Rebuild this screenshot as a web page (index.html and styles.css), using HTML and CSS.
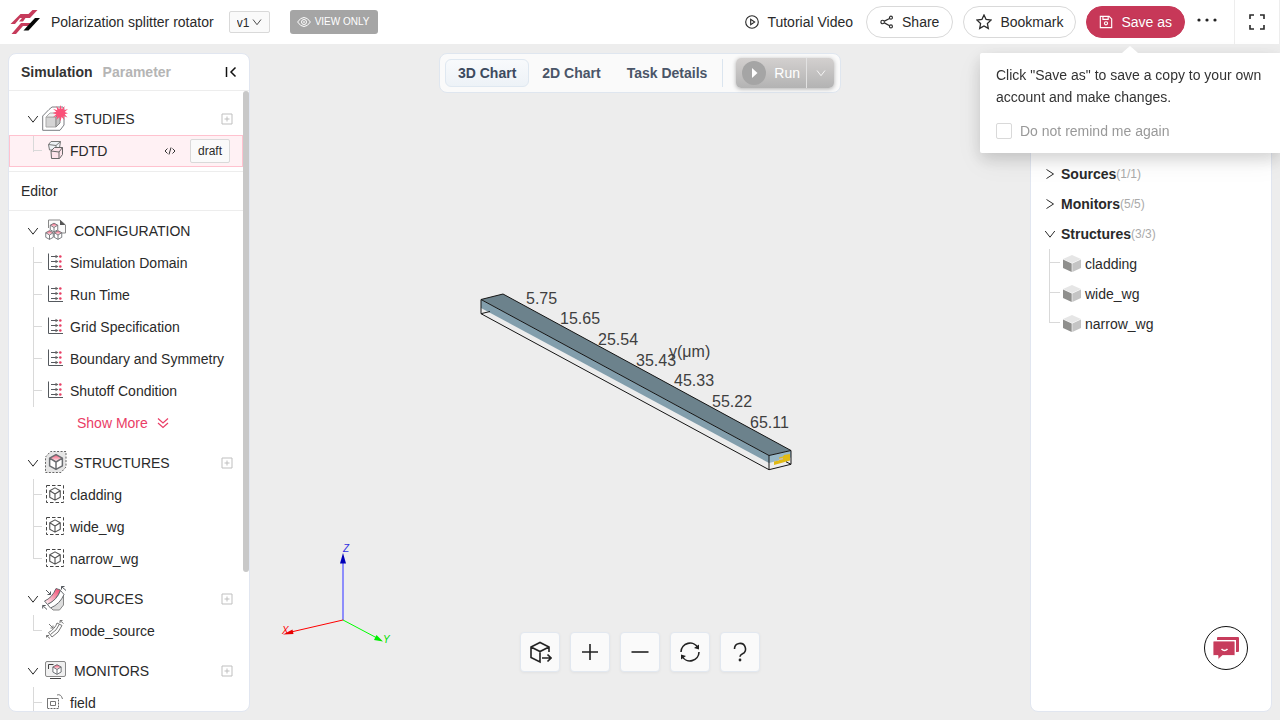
FILE: index.html
```html
<!DOCTYPE html>
<html lang="en">
<head>
<meta charset="utf-8">
<meta name="viewport" content="width=device-width, initial-scale=1">
<title>Polarization splitter rotator</title>
<link rel="stylesheet" href="styles.css">
</head>
<body>
<svg class="sprite" aria-hidden="true">
  <defs>
    <linearGradient id="pink" x1="0" y1="0" x2="0" y2="1"><stop offset="0" stop-color="#f0506f"/><stop offset="1" stop-color="#fff"/></linearGradient>
    <linearGradient id="pinkBand" x1="1" y1="0" x2="0" y2="1"><stop offset="0" stop-color="#f23f68"/><stop offset="1" stop-color="#fff"/></linearGradient>
    <symbol id="down" viewBox="0 0 12 12"><path d="M1.200 3 6 9.200 10.800 3" fill="none" stroke="currentColor"/></symbol>
    <symbol id="right" viewBox="0 0 12 12"><path d="M2.500 1.500 9.500 6 2.500 10.500" fill="none" stroke="currentColor"/></symbol>
    <symbol id="add" viewBox="0 0 12 12"><path d="M1 1h10v10H1zM6 3.500v5M3.500 6h5" fill="none" stroke="currentColor"/></symbol>
    <symbol id="cube" viewBox="0 0 16 16"><path d="M8 1 14 4.300v7.400L8 15 2 11.700V4.300zM2 4.300 8 8l6-3.700M8 8v7" fill="none" stroke="currentColor" stroke-width="1.300" stroke-linejoin="round"/></symbol>
    <symbol id="redcube" viewBox="0 0 16 16"><path d="M8 1 14 4.300v7.400L8 15 2 11.700V4.300z" fill="#fff"/><path d="M8 1 14 4.300 8 8 2 4.300z" fill="url(#pink)"/><path d="M8 1 14 4.300v7.400L8 15 2 11.700V4.300zM2 4.300 8 8l6-3.700M8 8v7" fill="none" stroke="#6a6d71" stroke-width="1.400" stroke-linejoin="round"/></symbol>
    <symbol id="param" viewBox="0 0 20 20">
      <path d="M3.500 1.500v16H18" fill="none" stroke="#55595e"/>
      <path d="M6 4.500h7M6 9.500h7M6 14.500h7" fill="none" stroke="#55595e"/>
      <path d="M10.500 2.700l3 1.800-3 1.800zM10.500 7.700l3 1.800-3 1.800zM10.500 12.700l3 1.800-3 1.800z" fill="#666"/>
      <circle cx="15.300" cy="4.500" r="1.300" fill="#e83e64"/><circle cx="15.300" cy="9.500" r="1.300" fill="#e83e64"/><circle cx="15.300" cy="14.500" r="1.300" fill="#e83e64"/>
    </symbol>
    <symbol id="struct" viewBox="0 0 20 20"><rect x="1.500" y="1.500" width="17" height="17" fill="none" stroke="#444" stroke-dasharray="3.500 2"/><use href="#cube" x="3" y="3" width="14" height="14" color="#555"/></symbol>
    <symbol id="solid" viewBox="0 0 18 18"><path d="M9 0 18 4 9 8 0 4z" fill="#e6e6e6"/><path d="M0 4.500 8.700 8.500v8.500L0 13z" fill="#8f8f8d"/><path d="M18 4.500 9.300 8.500v8.500L18 13z" fill="#c4c4c4"/></symbol>
  </defs>
</svg>

<header class="topbar">
  <svg class="logo" viewBox="0 0 30 24" aria-hidden="true"><path d="M22.500 0h5L20 8h-4.500l-2.500 3.500H9L12 8h-2l-5 6H.500L10.500 4h8z" fill="#c63b5b"/><path d="M11 13h10l-3 3h-5L6 24H1.500z" fill="#c63b5b"/><path d="M25 8h5L18.500 20.500H13.500l4.500-5z" fill="#050505"/></svg>
  <h1 class="title">Polarization splitter rotator</h1>
  <label class="version"><select aria-label="Version"><option>v1</option></select><svg viewBox="0 0 12 12" aria-hidden="true"><use href="#down"/></svg></label>
  <span class="badge"><svg viewBox="0 0 14 14" aria-hidden="true"><path d="M.6 7Q3.500 2.500 7 2.500T13.400 7Q10.500 11.500 7 11.500T.6 7z"/><circle cx="7" cy="7" r="2.500"/><circle cx="7" cy="7" r=".5"/></svg>VIEW ONLY</span>
  <nav class="actions">
    <a class="tutorial" href="#"><svg class="ico" viewBox="0 0 16 16"><circle cx="8" cy="8" r="7.200"/><path d="M6.500 5v6L11 8z"/></svg>Tutorial Video</a>
    <button class="pill"><svg class="ico" viewBox="0 0 16 16"><circle cx="3" cy="8" r="2"/><circle cx="12.500" cy="3" r="1.700"/><circle cx="12.500" cy="13" r="1.700"/><path d="M5 7 11 4M5 9l6 3.200"/></svg>Share</button>
    <button class="pill star"><svg class="ico" viewBox="0 0 16 16"><path d="M8 1l2.100 4.500 4.900.6-3.600 3.400.9 4.900L8 12l-4.300 2.400.9-4.900L1 6.100l4.900-.6z"/></svg>Bookmark</button>
    <button class="pill primary"><svg class="ico" viewBox="0 0 16 16"><path d="M1.500 1.500h10l3 3v10h-13zM4.500 1.500V5h6V1.500"/><circle cx="8" cy="9.500" r="1.800"/></svg>Save as</button>
    <button class="plain more" aria-label="More"><svg viewBox="0 0 20 8"><circle cx="2" cy="4" r="1.600"/><circle cx="10" cy="4" r="1.600"/><circle cx="18" cy="4" r="1.600"/></svg></button>
    <button class="plain full" aria-label="Full screen"><svg viewBox="0 0 16 16"><path d="M1 5V1h4M11 1h4v4M15 11v4h-4M5 15H1v-4"/></svg></button>
  </nav>
</header>

<main class="workspace">
  <aside class="panel left">
    <div class="tabs">
      <button class="plain active">Simulation</button><button class="plain">Parameter</button>
      <button class="plain collapse" aria-label="Collapse"><svg viewBox="0 0 12 12"><path d="M1.500 1v10M10.500 1.500 6 6l4.500 4.500"/></svg></button>
    </div>
    <div class="scroll-area">
      <div class="tree">
        <section class="group studies">
          <div class="group-head"><svg class="chev"><use href="#down"/></svg>
            <svg class="big" viewBox="0 0 26 26"><path d="M.7 11 7 4.500 10 2h11l1 2v16l-4 5.300H.7z" fill="#fff" stroke="#7a7d81"/><path d="M4 12h10v10H4z" fill="#d4d4d4" stroke="#aaa"/><path d="M4 12 8 8h10l-4 4z" fill="#eee" stroke="#aaa"/><path d="M18 8v10l-4 4V12z" fill="#c4c4c4" stroke="#888"/><path d="M18.500 0 19.700 4.200 22.700 1 21.700 5.300 26 4 22.700 7 26 8.200 22.700 9.300 25.500 12.500 21.500 11 22.500 15 19.600 12 18.500 16.500 17.300 12 14.300 15 15.300 10.900 11 12.300 14.300 9.200 10.500 8 14.300 6.800 11 3.700 15.300 5.200 14.300 1 17.300 4.200z" fill="#fb5078"/></svg>
            <span>STUDIES</span><button class="plain add" aria-label="Add study"><svg><use href="#add"/></svg></button></div>
          <ul>
            <li class="selected"><svg class="small" viewBox="0 0 20 20"><path d="M3.500 4.500 6 1.500h9.500l-1 6.500-3 2H4.500z" fill="#eef1f5" stroke="#777"/><path d="M3.500 4.500l7.500 1 4.500-4M11 5.500v4" fill="none" stroke="#777"/><path d="M6 11 9.500 7.500h8v7L14.500 18.500H6.500z" fill="#fde3ea" stroke="#666"/><path d="M6 11l8 1 3.500-4.500M14 12v6.500" fill="none" stroke="#666"/></svg><span>FDTD</span>
              <button class="plain code" aria-label="View code"><svg viewBox="0 0 12 10"><path d="M3.500 2.500 1 5l2.500 2.500M8.500 2.500 11 5 8.500 7.500M7 1.500l-2 7"/></svg></button><button class="draft">draft</button></li>
          </ul>
        </section>
        <h2 class="editor">Editor</h2>
        <section class="group">
          <div class="group-head"><svg class="chev"><use href="#down"/></svg>
            <svg class="big" viewBox="0 0 26 26"><path d="M6.500 11V3H18l5.500 5v8H17" fill="#fafafa" stroke="#888"/><path d="M18 3v5h5.500z" fill="#555"/><use href="#redcube" x="7" y="5.500" width="10" height="10"/><use href="#redcube" x="2.500" y="13" width="10" height="10"/><use href="#redcube" x="11" y="13" width="10" height="10"/></svg>
            <span>CONFIGURATION</span></div>
          <ul class="open">
            <li><svg class="small"><use href="#param"/></svg><span>Simulation Domain</span></li>
            <li><svg class="small"><use href="#param"/></svg><span>Run Time</span></li>
            <li><svg class="small"><use href="#param"/></svg><span>Grid Specification</span></li>
            <li><svg class="small"><use href="#param"/></svg><span>Boundary and Symmetry</span></li>
            <li><svg class="small"><use href="#param"/></svg><span>Shutoff Condition</span></li>
          </ul>
          <button class="plain show-more">Show More<svg viewBox="0 0 12 12"><path d="M1 1.500 6 6l5-4.500M1 6 6 10.500 11 6"/></svg></button>
        </section>
        <section class="group">
          <div class="group-head"><svg class="chev"><use href="#down"/></svg>
            <svg class="big" viewBox="0 0 26 26"><path d="M3.500 8l5-5.500h15.500V18l-5 5.500H3.500z" fill="#e6e6e6" stroke="#666" stroke-dasharray="2 1.500"/><use href="#redcube" x="5.500" y="4.500" width="17" height="17"/></svg>
            <span>STRUCTURES</span><button class="plain add" aria-label="Add structure"><svg><use href="#add"/></svg></button></div>
          <ul>
            <li><svg class="small"><use href="#struct"/></svg><span>cladding</span></li>
            <li><svg class="small"><use href="#struct"/></svg><span>wide_wg</span></li>
            <li><svg class="small"><use href="#struct"/></svg><span>narrow_wg</span></li>
          </ul>
        </section>
        <section class="group">
          <div class="group-head"><svg class="chev"><use href="#down"/></svg>
            <svg class="big" viewBox="0 0 26 26"><path d="M12 17 21.500 9v11l-4 5H11l-3-3z" fill="#ddd" stroke="#888"/><path d="M2.500 16Q10 13 14 3.500L18.500 5Q15 15 5.500 19.500z" fill="url(#pinkBand)" stroke="#6a6d71"/><path d="M5.500 19.500Q15 15 18.500 5.500L22 9.500Q18 19 8.500 23z" fill="#fff" stroke="#6a6d71"/><path d="M4 5l4.500 4.500M8.500 6.500v3h-3M24 5.500l-4.500-4M19.500 4.500v-3h3M5 24.500.7 20.500M.7 23.500v-3h3" fill="none" stroke="#55595e"/></svg>
            <span>SOURCES</span><button class="plain add" aria-label="Add source"><svg><use href="#add"/></svg></button></div>
          <ul>
            <li><svg class="small" viewBox="0 0 20 20"><path d="M3.500 12.500Q10 9 12 3L17 5.500Q14 13 7 17zM5.500 14.500Q12 10.500 14.500 4" fill="#fff" stroke="#777"/><path d="M4 4l4 4M8 5.500V8H5.500M18.500 3.500l-3.500-3M15 3V.5h2.500M5 18.500l-3.500-3M1.500 17.500v-2H4" fill="none" stroke="#777"/></svg><span>mode_source</span></li>
          </ul>
        </section>
        <section class="group">
          <div class="group-head"><svg class="chev"><use href="#down"/></svg>
            <svg class="big" viewBox="0 0 26 26"><rect x="3.500" y="4.500" width="20" height="15" rx="1.500" fill="#f0f0f0" stroke="#888"/><path d="M6.500 12V7.500h5M8 21.500h11" fill="none" stroke="#444"/><use href="#redcube" x="9.500" y="7" width="11" height="11"/></svg>
            <span>MONITORS</span><button class="plain add" aria-label="Add monitor"><svg><use href="#add"/></svg></button></div>
          <ul class="open">
            <li><svg class="small" viewBox="0 0 20 20"><path d="M2.500 6.500h11v10h-11z" fill="none" stroke="#666" stroke-dasharray="2 1"/><path d="M5.500 9.500h5v4h-5zM2.500 16V6.500H13M12 3q4-1.500 5.500 4" fill="none" stroke="#777"/></svg><span>field</span></li>
          </ul>
        </section>
      </div>
      <div class="track"><div class="thumb"></div></div>
    </div>
  </aside>

  <section class="stage">
    <svg class="scene" viewBox="250 53 780 659" role="img" aria-label="3D model of the splitter">
      <path d="M481 299.500 503 294 791 450.500 769 455.500z" fill="#6c828c"/>
      <path d="M481 299.500 769 455.500v7.500L481 308z" fill="#829eac"/>
      <path d="M769 455.500 791 450.500v7L769 463z" fill="#98b7c6"/>
      <path d="M774 461.500l5-1v-3l4-1 1-1.500 6-1v6.500L774 465z" fill="#e1ba14"/>
      <path d="M779 459.500l4-1" stroke="#c9bcb0" stroke-width="1.500"/>
      <path d="M481 299.500 503 294 791 450.500 769 455.500zM481 299.500V313.700L769 469.700V455.500M769 469.700 791 464.300V450.500M481 313.700l9-2.200M791 464.300l-5-2.500" fill="none" stroke="#151515" stroke-linejoin="round"/>
      <g class="ticks">
        <text x="526" y="304">5.75</text><text x="560" y="324">15.65</text><text x="598" y="345">25.54</text><text x="636" y="366">35.43</text><text x="669" y="357">y(μm)</text><text x="674" y="386">45.33</text><text x="712" y="407">55.22</text><text x="750" y="428">65.11</text>
      </g>
      <g class="axes">
        <text x="343" y="552" fill="#3030e0">Z</text><text x="282" y="634" fill="#f00">X</text><text x="383" y="643" fill="#0d0">Y</text>
        <path d="M343 620v-57" stroke="#6c6cff" stroke-width="1.500"/><path d="M343 553l3 10.500h-6z" fill="#0000b8"/>
        <path d="M343 620l-52 12" stroke="#f00"/><path d="M283 634.500l9.500-5 1 4.500z" fill="#e80000"/>
        <path d="M343 620l34 18" stroke="#0f0"/><path d="M383 641.500l-9-1.500 2.500-5z" fill="#00ee00"/>
      </g>
    </svg>
    <div class="toolbar">
      <button class="tab current">3D Chart</button><button class="tab">2D Chart</button><button class="tab">Task Details</button>
      <span class="rule"></span>
      <div class="run"><button class="run-main"><svg viewBox="0 0 24 24" aria-hidden="true"><circle cx="12" cy="12" r="12" fill="#a5a5a5"/><path d="M10 7v10l5.500-5z" fill="#fff"/></svg>Run</button><button class="run-menu" aria-label="Run options"><svg viewBox="0 0 12 12"><use href="#down"/></svg></button></div>
    </div>
    <div class="controls">
      <button aria-label="View"><svg viewBox="0 0 24 24"><path d="M21 12V7L12 2.500 3 7v10.500l9 4.500V11.500M3 7l9 4.500L21 7M14 18h9M19.500 14.500 23 18l-3.500 3.500"/></svg></button>
      <button aria-label="Zoom in"><svg viewBox="0 0 24 24"><path d="M4 12h16M12 4v16"/></svg></button>
      <button aria-label="Zoom out"><svg viewBox="0 0 24 24"><path d="M3.500 12h17"/></svg></button>
      <button aria-label="Reset"><svg viewBox="0 0 24 24"><path d="M3 12A9 9 0 0 1 20 8M21 12A9 9 0 0 1 4 16"/><path d="M21 4.500v5l-5-1.500zM3 19.500v-5L8 16z" fill="#222" stroke="none"/></svg></button>
      <button aria-label="Help"><svg viewBox="0 0 24 24"><path d="M6.500 9a5.500 5.500 0 1 1 8 4.800Q12 15 12 16.800"/><circle cx="12" cy="20" r=".6" fill="#222"/></svg></button>
    </div>
  </section>

  <aside class="panel right">
    <button class="plain node"><svg class="chev"><use href="#right"/></svg><b>Sources</b><small>(1/1)</small></button>
    <button class="plain node"><svg class="chev"><use href="#right"/></svg><b>Monitors</b><small>(5/5)</small></button>
    <button class="plain node"><svg class="chev"><use href="#down"/></svg><b>Structures</b><small>(3/3)</small></button>
    <ul>
      <li><svg><use href="#solid"/></svg>cladding</li>
      <li><svg><use href="#solid"/></svg>wide_wg</li>
      <li><svg><use href="#solid"/></svg>narrow_wg</li>
    </ul>
  </aside>
</main>

<div class="popover" role="dialog" aria-label="Save a copy">
  <p>Click "Save as" to save a copy to your own<br>account and make changes.</p>
  <label><input type="checkbox">Do not remind me again</label>
</div>
<button class="chat" aria-label="Chat"><svg viewBox="0 0 26 24"><path d="M5 1h20a1 1 0 0 1 1 1v13a1 1 0 0 1-1 1h-2V4H4V2a1 1 0 0 1 1-1z" fill="#c73c5c"/><path d="M1 5h20a1 1 0 0 1 1 1v12.500a1 1 0 0 1-1 1H9.500L5 23.500v-4H1a1 1 0 0 1-1-1V6a1 1 0 0 1 1-1z" fill="#c73c5c" stroke="#fff" stroke-width=".8"/><path d="M8.500 13q3 3 6 0" fill="none" stroke="#fff" stroke-width="1.500"/></svg></button>
</body>
</html>
```
FILE: styles.css
```css
* { box-sizing: border-box; }
body {
  margin: 0;
  height: 100vh;
  display: flex;
  flex-direction: column;
  overflow: hidden;
  background: #ededed;
  color: #2a2a2a;
  font: 14px/22px "Liberation Sans", Arial, sans-serif;
}
button, select { font: inherit; color: inherit; cursor: pointer; }
button { padding: 0; }
h1, h2, p, ul { margin: 0; padding: 0; }
ul { list-style: none; }
svg { display: block; flex: none; }
a { color: inherit; text-decoration: none; }
.sprite { position: absolute; width: 0; height: 0; }
.plain { border: 0; background: none; }

.topbar { flex: none; height: 44px; display: flex; align-items: center; background: #fff; padding-left: 10px; }
.logo { width: 30px; height: 24px; }
.title { margin-left: 11px; font-size: 14px; font-weight: 400; white-space: nowrap; }
.version { display: grid; align-items: center; width: 41px; height: 22px; margin-left: 15px; }
.version select { grid-area: 1 / 1; appearance: none; width: 100%; height: 22px; padding: 0 7px; border: 1px solid #d9d9d9; border-radius: 2px; background: #fafafa; font-size: 12px; }
.version svg { grid-area: 1 / 1; justify-self: end; width: 10px; height: 10px; margin-right: 8px; pointer-events: none; }
.badge { display: flex; align-items: center; gap: 4px; height: 24px; margin-left: 20px; padding: 0 9px 0 7px; border-radius: 3px; background: #a5a5a5; color: #fff; font-size: 10px; white-space: nowrap; }
.badge svg { width: 14px; height: 14px; fill: none; stroke: #fff; }
.actions { display: flex; align-items: center; margin-left: auto; height: 44px; gap: 10px; }
.actions svg { fill: none; stroke: currentColor; }
.ico { width: 14px; height: 14px; stroke-width: 1.3; }
.tutorial { display: flex; align-items: center; gap: 8px; margin-right: 3px; white-space: nowrap; }
.pill { display: flex; align-items: center; gap: 8px; height: 32px; padding: 0 13px; border: 1px solid #d9d9d9; border-radius: 16px; background: #fff; white-space: nowrap; }
.star { padding: 0 12px; }
.star .ico { width: 16px; height: 16px; }
.pill.primary { padding: 0 12px; border-color: #c73858; background: #c73858; color: #fff; text-shadow: 0 -1px 0 rgba(0,0,0,.12); }
.more { margin-left: 2px; padding-bottom: 4px; }
.more svg { width: 20px; height: 8px; fill: #222; stroke: none; }
.full { width: 46px; height: 44px; margin-left: 7px; border: solid #ededed; border-width: 0 1px; display: grid; place-items: center; }
.full svg { width: 16px; height: 16px; stroke-width: 1.6; }

.workspace { flex: 1; min-height: 0; display: grid; grid-template-columns: 242px 1fr 242px; padding: 9px 8px 8px; }
.panel { min-height: 0; border: 1px solid #e1e6f0; border-radius: 8px; background: #fff; overflow: hidden; }
.left { display: flex; flex-direction: column; }
.tabs { flex: none; display: flex; align-items: center; gap: 10px; height: 37px; padding: 0 12px; border-bottom: 1px solid #ededed; }
.tabs .plain { font-weight: 700; color: #b5b5b5; }
.tabs .active { color: #333; }
.tabs .collapse { margin-left: auto; color: #111; }
.collapse svg { width: 12px; height: 12px; fill: none; stroke: currentColor; stroke-width: 1.5; }
.scroll-area { flex: 1; min-height: 0; display: flex; }
.tree { flex: 1; min-width: 0; overflow: hidden; padding-top: 12px; }
.track { flex: none; width: 6px; }
.thumb { height: 77.5%; border-radius: 3px; background: #c8c8c8; }
.group { margin-bottom: 8px; }
.studies { margin-bottom: 4px; }
.group-head { display: flex; align-items: center; height: 32px; padding: 0 10px 0 18px; }
.chev { width: 12px; height: 12px; }
.big { width: 26px; height: 26px; margin: 0 6px 2px 3px; }
.add { margin-left: auto; color: #bfbfbf; }
.add svg { width: 12px; height: 12px; }
.tree li { position: relative; display: flex; align-items: center; gap: 5px; height: 32px; padding-left: 36px; white-space: nowrap; }
.tree li::before, .right li::before { content: ""; position: absolute; left: 24px; top: 0; width: 1px; height: 100%; background: #d9d9d9; }
.tree li:last-child::before { height: 16px; }
.tree .open li:last-child::before { height: 100%; }
.tree li::after, .right li::after { content: ""; position: absolute; left: 24px; top: 15px; width: 9px; height: 1px; background: #d9d9d9; }
.small { width: 20px; height: 20px; margin-bottom: 2px; }
.tree .selected { padding: 0 12px 0 35px; border: 1px solid #ffc2cf; background: #fff1f4; }
.tree .selected::before { left: 23px; }
.tree .selected::after { left: 23px; top: 14px; }
.code { margin-left: auto; margin-right: 9px; }
.code svg { width: 12px; height: 10px; fill: none; stroke: #333; }
.draft { height: 24px; padding: 0 7px; border: 1px solid #d9d9d9; border-radius: 2px; background: #fafafa; font-size: 12px; }
.editor { height: 40px; margin-bottom: 4px; padding-left: 12px; border: solid #ededed; border-width: 1px 0; font-size: 14px; font-weight: 400; line-height: 38px; }
.show-more { display: flex; align-items: center; gap: 9px; height: 32px; padding-left: 68px; color: #ea3d66; }
.show-more svg { width: 12px; height: 12px; fill: none; stroke: currentColor; stroke-width: 1.2; }

.stage { position: relative; min-width: 0; display: flex; flex-direction: column; align-items: center; justify-content: space-between; padding-bottom: 40px; }
.scene { position: absolute; inset: 0; width: 100%; height: 100%; }
.ticks { font-size: 16px; fill: #3f3f3f; }
.axes { font-size: 10px; font-style: italic; }
.toolbar { position: relative; display: flex; align-items: center; height: 40px; padding: 0 6px 0 5px; border: 1px solid #dfe6ef; border-radius: 8px; background: #fafafa; }
.tab { height: 28px; padding: 0 12px; border: 1px solid transparent; border-radius: 6px; background: none; color: #4a5568; font-weight: 700; white-space: nowrap; }
.tab.current { border-color: #dfe8f1; background: linear-gradient(#f8fafc, #edf2f7); color: #3c4a5e; }
.rule { width: 1px; height: 28px; margin-left: 2px; background: #dbe5ef; }
.run { display: flex; height: 30px; margin-left: 13px; border-radius: 5px; background: linear-gradient(#d3d0cf, #b3b3b3); color: #fff; box-shadow: 0 1px 4px rgba(0,0,0,.3); }
.run-main, .run-menu { border: 0; background: none; }
.run-main { display: flex; align-items: center; gap: 8px; padding: 0 6px; }
.run-main svg { width: 24px; height: 24px; }
.run-menu { width: 28px; display: grid; place-items: center; border-left: 1px solid #e2e2e2; }
.run-menu svg { width: 10px; height: 10px; }
.controls { position: relative; display: flex; gap: 10px; }
.controls button { width: 40px; height: 40px; display: grid; place-items: center; border: 1px solid #e2e8f0; border-radius: 4px; background: #fafafa; box-shadow: 0 1px 3px rgba(0,0,0,.05); }
.controls svg { width: 24px; height: 24px; fill: none; stroke: #222; stroke-width: 1.6; }

.right { padding-top: 105px; }
.node { display: flex; align-items: center; height: 30px; padding-left: 13px; }
.node .chev { margin-right: 5px; }
.node small { font-size: 12px; color: #aaa; }
.right li { position: relative; display: flex; align-items: center; gap: 4px; height: 30px; padding-left: 32px; }
.right li::before { left: 18px; }
.right li::after { left: 18px; top: 13px; width: 11px; }
.right li:last-child::before { height: 14px; }
.right li svg { width: 18px; height: 18px; }

.popover { position: fixed; top: 53px; right: 0; width: 300px; padding: 11px 16px; background: #fff; border-radius: 2px 0 0 2px; box-shadow: 0 6px 16px rgba(0,0,0,.14), 0 9px 28px rgba(0,0,0,.06); color: #333; }
.popover::before { content: ""; position: absolute; top: -7px; left: 142px; border: solid transparent; border-width: 0 8px 7px; border-bottom-color: #fff; }
.popover p { white-space: nowrap; }
.popover label { display: flex; align-items: center; gap: 8px; margin-top: 12px; color: #999; }
.popover input { appearance: none; width: 16px; height: 16px; margin: 0; border: 1px solid #d9d9d9; border-radius: 2px; background: #fff; }
.chat { position: fixed; right: 32px; bottom: 50px; width: 44px; height: 44px; display: grid; place-items: center; border: 1px solid #111; border-radius: 50%; background: #fff; }
.chat svg { width: 26px; height: 24px; }
```
